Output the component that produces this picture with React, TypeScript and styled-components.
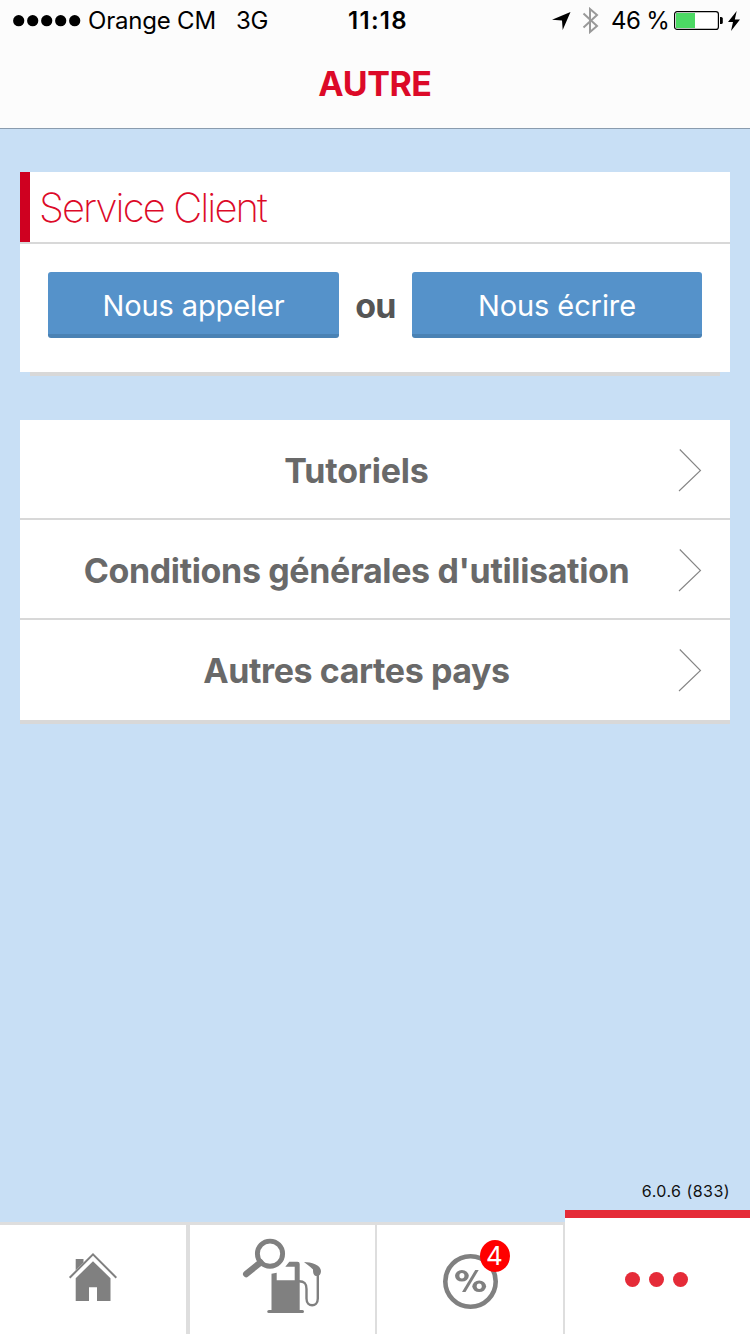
import React from "react";
import styled, { createGlobalStyle } from "styled-components";

const GlobalStyle = createGlobalStyle`
  * { box-sizing: border-box; }
  body { margin: 0; background: #c8dff5; font-family: Inter, "Liberation Sans", sans-serif; }
`;

const Screen = styled.div`
  width: 750px;
  height: 1334px;
  display: flex;
  flex-direction: column;
  background: #c8dff5;
  overflow: hidden;
`;

const Header = styled.header`
  height: 129px;
  flex: none;
  display: flex;
  flex-direction: column;
  background: #fcfcfc;
  border-bottom: 1px solid #8a9cae;
`;

const StatusBar = styled.div`
  height: 40px;
  display: grid;
  grid-template-columns: 1fr auto 1fr;
  grid-template-rows: 40px;
  align-items: start;
  padding: 0 10px 0 13px;
  color: #000;
  font-size: 24px;
  line-height: 40px;
`;

const StatusGroup = styled.div<{ $end?: boolean }>`
  display: flex;
  align-items: center;
  height: 40px;
  padding-top: 1px;
  justify-content: ${(p) => (p.$end ? "flex-end" : "flex-start")};
`;

const SignalDots = styled.svg`
  margin-right: 7px;
`;

const StatusText = styled.span<{ $spacing?: number; $gap?: number }>`
  white-space: nowrap;
  letter-spacing: ${(p) => p.$spacing ?? 0}px;
  margin-right: ${(p) => p.$gap ?? 0}px;
`;

const Clock = styled.time`
  padding: 1px 0 0 3px;
  font-weight: 600;
  letter-spacing: 1.3px;
`;

const StatusIcon = styled.svg<{ $gap?: number }>`
  flex: none;
  margin-right: ${(p) => p.$gap ?? 0}px;
`;

const Title = styled.h1`
  margin: 0;
  height: 88px;
  line-height: 88px;
  text-align: center;
  font-size: 34px;
  font-weight: 650;
  letter-spacing: -0.4px;
  color: #dc0a28;
`;

const Content = styled.main`
  flex: 1;
  display: flex;
  flex-direction: column;
  padding: 43px 20px 0;
`;

const Card = styled.section`
  height: 200px;
  background: #fff;
`;

const CardShadow = styled.div`
  height: 4px;
  margin: 0 10px 44px;
  background: #d8d8d8;
`;

const CardTitle = styled.h2`
  margin: 0;
  height: 70px;
  padding-left: 9px;
  border-left: 10px solid #cf0020;
  color: #dc0a28;
  font-size: 40px;
  font-weight: 200;
  line-height: 72px;
  letter-spacing: -1.9px;
`;

const CardActions = styled.div`
  height: 130px;
  display: flex;
  justify-content: space-between;
  padding: 28px 28px 0;
  border-top: 2px solid #d8d8d8;
`;

const ActionButton = styled.button<{ $width: number }>`
  width: ${(p) => p.$width}px;
  height: 66px;
  padding: 5px 0 0;
  border: 0;
  border-bottom: 4px solid #4a82b4;
  border-radius: 3px;
  background: #5592ca;
  color: #fff;
  font: 400 29px/57px Inter, sans-serif;
  letter-spacing: -0.1px;
`;

const Or = styled.span`
  line-height: 67px;
  font-size: 34px;
  font-weight: 650;
  letter-spacing: -0.8px;
  color: #555;
`;

const List = styled.nav`
  display: flex;
  flex-direction: column;
  border-bottom: 4px solid #d8d8d8;
`;

const Row = styled.a`
  height: 100px;
  display: flex;
  align-items: center;
  padding-right: 28px;
  background: #fff;
  border-bottom: 2px solid #d8d8d8;
  &:last-child { border-bottom-color: #fff; }
`;

const RowLabel = styled.span<{ $spacing: number }>`
  flex: 1;
  padding: 3px 0 0 15px;
  text-align: center;
  white-space: nowrap;
  font-size: 34px;
  font-weight: 650;
  letter-spacing: ${(p) => p.$spacing}px;
  color: #696969;
`;

const Version = styled.div`
  height: 22px;
  margin-bottom: 8px;
  padding-right: 20px;
  text-align: right;
  font-size: 16px;
  line-height: 23px;
  letter-spacing: 0.45px;
  color: #111;
`;

const TabBar = styled.footer`
  flex: none;
  height: 124px;
  display: flex;
  align-items: flex-end;
`;

const Tab = styled.div<{ $width: number; $divider?: number; $active?: boolean }>`
  position: relative;
  width: ${(p) => p.$width}px;
  height: ${(p) => (p.$active ? 124 : 112)}px;
  background: #fff;
  border-top: ${(p) => (p.$active ? "8px solid #e52b38" : "3px solid #dedede")};
  box-shadow: inset -${(p) => p.$divider ?? 0}px 0 0 #dedede;
`;

const TabIcon = styled.svg`
  display: block;
`;

const Badge = styled.span`
  position: absolute;
  left: 103px;
  top: 15px;
  width: 30px;
  height: 32px;
  padding-right: 1px;
  border-radius: 50%;
  background: #f00;
  color: #fff;
  text-align: center;
  font-size: 26px;
  line-height: 31px;
`;

const Chevron = () => (
  <svg width="24" height="46" viewBox="0 0 24 46" fill="none" stroke="#858585" strokeWidth="1.1">
    <path d="M1.8 3.5 22.5 24.5 1 45" />
  </svg>
);

const rows = [
  { label: "Tutoriels", spacing: -0.2 },
  { label: "Conditions générales d'utilisation", spacing: -0.37 },
  { label: "Autres cartes pays", spacing: -0.42 },
];

export default function App() {
  return (
    <>
      <GlobalStyle />
      <Screen>
        <Header>
          <StatusBar>
            <StatusGroup>
              <SignalDots width="68" height="12" viewBox="0 0 68 12">
                {[0, 1, 2, 3, 4].map((i) => (
                  <circle key={i} cx={5.7 + i * 14} cy="5.7" r="5.6" />
                ))}
              </SignalDots>
              <StatusText $spacing={-0.2} $gap={20}>Orange CM</StatusText>
              <StatusText $spacing={-0.3}>3G</StatusText>
            </StatusGroup>
            <Clock>11:18</Clock>
            <StatusGroup $end>
              <StatusIcon $gap={11} width="19" height="18" viewBox="0 0 19 18">
                <path d="M18.5 0 10.7 18 10 8.5 0 7.8Z" />
              </StatusIcon>
              <StatusIcon $gap={12} width="17" height="27" viewBox="0 0 17 27" fill="none" stroke="#999" strokeWidth="2">
                <path d="M1.5 6.5 15 19 8 25V2L15 8 1.5 20.5" />
              </StatusIcon>
              <StatusText $spacing={-0.7} $gap={5}>46 %</StatusText>
              <StatusIcon $gap={5} width="49" height="19" viewBox="0 0 49 19">
                <rect x=".6" y=".6" width="43.8" height="17.8" rx="2.5" fill="#fff" stroke="#000" strokeWidth="1.2" />
                <rect x="2" y="2" width="19" height="15" fill="#4cd964" />
                <path d="M46 6h1.2q1.6 0 1.6 1.5v4q0 1.5-1.6 1.5H46Z" />
              </StatusIcon>
              <StatusIcon width="12" height="20" viewBox="0 0 12 20">
                <path d="M8.7 0 0 11h5L3 20 12 8.5H6.8Z" />
              </StatusIcon>
            </StatusGroup>
          </StatusBar>
          <Title>AUTRE</Title>
        </Header>
        <Content>
          <Card>
            <CardTitle>Service Client</CardTitle>
            <CardActions>
              <ActionButton $width={291}>Nous appeler</ActionButton>
              <Or>ou</Or>
              <ActionButton $width={290}>Nous écrire</ActionButton>
            </CardActions>
          </Card>
          <CardShadow />
          <List>
            {rows.map((r) => (
              <Row key={r.label}>
                <RowLabel $spacing={r.spacing}>{r.label}</RowLabel>
                <Chevron />
              </Row>
            ))}
          </List>
        </Content>
        <Version>6.0.6 (833)</Version>
        <TabBar>
          <Tab $width={190} $divider={4}>
            <TabIcon width="186" height="109" viewBox="0 1225 186 109" fill="#808080">
              <path d="M93 1261.2 110.5 1278.2V1301H97V1287.2H89V1301H75.7V1278.2Z" />
              <path d="M75.7 1259H83.5V1262.5L75.7 1270.2Z" />
              <path d="M69.7 1277.7 93 1254.4 116.3 1277.7" fill="none" stroke="#808080" strokeWidth="2" />
            </TabIcon>
          </Tab>
          <Tab $width={187} $divider={2}>
            <TabIcon width="185" height="109" viewBox="190 1225 185 109" fill="#808080">
              <circle cx="270" cy="1253.7" r="12.6" fill="none" stroke="#808080" strokeWidth="4.9" />
              <path d="M260.5 1262.5 246.2 1274" stroke="#808080" strokeWidth="6.4" strokeLinecap="round" />
              <path d="M271.5 1273.8 276.7 1272.7V1280.2H294.7V1266.7H285.3L289.3 1261.7H297.5Q299.7 1261.7 299.7 1264V1310H302.5Q304 1310 304 1311.5T302.5 1313H269Q267.2 1313 267.2 1311.5T269 1310H271.5Z" />
              <path d="M299 1281.3C305 1281.3 306.5 1284 306.5 1289V1298.5C306.5 1307.5 317.8 1307.5 317.8 1298.5V1274" fill="none" stroke="#808080" strokeWidth="2.4" />
              <path d="M304 1262C311 1262 321 1265 321 1271C321 1274 319.5 1276 317 1276C314 1276 313 1274 313 1269.5C310 1266 306 1264 304 1262Z" />
            </TabIcon>
          </Tab>
          <Tab $width={188} $divider={2}>
            <TabIcon width="186" height="109" viewBox="377 1225 186 109" fill="#808080">
              <circle cx="470.5" cy="1281.5" r="25.2" fill="none" stroke="#808080" strokeWidth="4.6" />
              <ellipse cx="461.9" cy="1275.8" rx="6.9" ry="5.8" />
              <ellipse cx="461.9" cy="1275.8" rx="2.5" ry="2.7" fill="#fff" />
              <ellipse cx="479.2" cy="1286.3" rx="6.9" ry="5.8" />
              <ellipse cx="479.2" cy="1286.3" rx="2.5" ry="2.7" fill="#fff" />
              <path d="M475.2 1270H478.7L465.5 1292H462Z" />
            </TabIcon>
            <Badge>4</Badge>
          </Tab>
          <Tab $width={185} $active>
            <TabIcon width="185" height="116" viewBox="565 1218 185 116" fill="#e52b38">
              <circle cx="632.5" cy="1279.5" r="7.5" />
              <circle cx="656.5" cy="1279.5" r="7.5" />
              <circle cx="680.5" cy="1279.5" r="7.5" />
            </TabIcon>
          </Tab>
        </TabBar>
      </Screen>
    </>
  );
}
